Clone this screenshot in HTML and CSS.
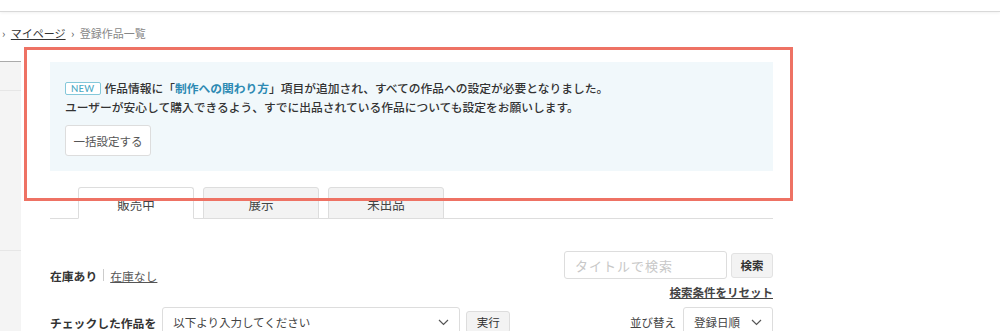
FILE: index.html
```html
<!DOCTYPE html>
<html lang="ja">
<head>
    <meta charset="UTF-8">
    <meta name="viewport" content="width=device-width, initial-scale=1.0">
    <title>登録作品一覧</title>
    <link rel="stylesheet" href="styles.css">
</head>
<body>
    <div class="header"></div>
    <div class="breadcrumb">
        <span class="sep">›</span>
        <a href="#" class="crumb-link">マイページ</a>
        <span class="sep">›</span>
        <span class="crumb-current">登録作品一覧</span>
    </div>
    <div class="layout">
        <div class="sidebar">
            <div class="side-item"></div>
            <div class="side-item tall"></div>
        </div>
        <div class="main">
            <div class="notice">
                <p class="notice-line">
                    <span class="badge">NEW</span>作品情報に「<a href="#" class="notice-link">制作への関わり方</a>」項目が追加され、すべての作品への設定が必要となりました。
                </p>
                <p class="notice-line">ユーザーが安心して購入できるよう、すでに出品されている作品についても設定をお願いします。</p>
                <button type="button" class="btn-bulk">一括設定する</button>
            </div>

            <div class="tabs">
                <div class="tab active">販売中</div>
                <div class="tab">展示</div>
                <div class="tab">未出品</div>
            </div>

            <div class="tools">
                <div class="tools-left">
                    <div class="stock">
                        <span class="stock-on">在庫あり</span>
                        <span class="stock-sep"></span>
                        <a href="#" class="stock-off">在庫なし</a>
                    </div>
                    <div class="action-row">
                        <span class="action-label">チェックした作品を</span>
                        <div class="select wide">
                            <span>以下より入力してください</span>
                            <svg width="11" height="7" viewBox="0 0 11 7"><path d="M1 1l4.5 4.5L10 1" fill="none" stroke="#555" stroke-width="1.2"/></svg>
                        </div>
                        <button type="button" class="btn-small">実行</button>
                    </div>
                </div>
                <div class="tools-right">
                    <div class="search-row">
                        <input type="text" class="search-input" placeholder="タイトルで検索">
                        <button type="button" class="btn-search">検索</button>
                    </div>
                    <a href="#" class="reset-link">検索条件をリセット</a>
                    <div class="sort-row">
                        <span class="sort-label">並び替え</span>
                        <div class="select narrow">
                            <span>登録日順</span>
                            <svg width="11" height="7" viewBox="0 0 11 7"><path d="M1 1l4.5 4.5L10 1" fill="none" stroke="#555" stroke-width="1.2"/></svg>
                        </div>
                    </div>
                </div>
            </div>
        </div>
    </div>

    <!-- annotation frame laid over the page -->
    <div class="highlight"></div>
</body>
</html>
```

FILE: styles.css
```css
body {
    margin: 0;
    font-family: "Noto Sans CJK JP", "Noto Sans", sans-serif;
    color: #333;
    background: #fff;
    overflow: hidden;
}
a {
    color: inherit;
}
p {
    margin: 0;
}
.header {
    height: 11px;
    border-bottom: 1px solid #d9d9d9;
    box-shadow: 0 1px 3px rgba(0, 0, 0, 0.06);
}
.breadcrumb {
    height: 49px;
    padding-left: 2px;
    font-size: 11px;
    line-height: 42px;
    color: #555;
}
.breadcrumb .sep {
    margin-right: 3px;
}
.crumb-link {
    color: #333;
    margin-right: 3px;
}
.crumb-current {
    color: #888;
}
.layout {
    display: flex;
    height: 300px;
}
.sidebar {
    width: 21px;
    background: #f4f4f4;
    border-top: 1px solid #aaa;
}
.side-item {
    height: 28px;
    border-bottom: 1px solid #e6e6e6;
}
.side-item.tall {
    height: 159px;
}
.main {
    width: 723px;
    padding: 1px 0 0 29px;
}
.notice {
    background: #f1f8fb;
    padding: 16px 15px 15px;
    height: 78px;
}
.notice-line {
    font-size: 11.75px;
    line-height: 19px;
    font-weight: 500;
    color: #333;
    white-space: nowrap;
}
.badge {
    display: inline-block;
    font-family: Lato, "Noto Sans", sans-serif;
    font-size: 9.5px;
    line-height: 11px;
    color: #4aa8c3;
    border: 1px solid #84c8da;
    background: #fff;
    border-radius: 2px;
    padding: 0 5px;
    margin-right: 4px;
    vertical-align: 1px;
    letter-spacing: 0.3px;
}
.notice-link {
    color: #2d8ab3;
    text-decoration: none;
    font-weight: 700;
}
.btn-bulk {
    margin-top: 9px;
    width: 86px;
    height: 31px;
    padding: 0;
    font-family: inherit;
    font-size: 11.5px;
    color: #555;
    background: #fff;
    border: 1px solid #ddd;
    border-radius: 3px;
}
.tabs {
    display: flex;
    gap: 9px;
    margin-top: 16px;
    padding-left: 28px;
    border-bottom: 1px solid #ddd;
}
.tab {
    width: 114px;
    height: 30px;
    margin-bottom: -1px;
    text-align: center;
    font-size: 12.5px;
    line-height: 34px;
    color: #444;
    background: #f3f3f3;
    border: 1px solid #ddd;
    border-radius: 3px 3px 0 0;
}
.tab.active {
    background: #fff;
    border-bottom-color: #fff;
}
.tools {
    display: flex;
    justify-content: space-between;
    margin-top: 32px;
}
.tools-left {
    padding-top: 15px;
}
.stock {
    display: flex;
    align-items: center;
    height: 18px;
    font-size: 11.8px;
}
.stock-on {
    font-weight: 700;
}
.stock-sep {
    width: 1px;
    height: 12px;
    background: #ccc;
    margin: 0 6px;
}
.stock-off {
    color: #555;
}
.action-row {
    display: flex;
    align-items: center;
    gap: 6px;
    margin-top: 23px;
}
.action-label {
    font-size: 11.8px;
    font-weight: 700;
    white-space: nowrap;
}
.select {
    display: flex;
    justify-content: space-between;
    align-items: center;
    box-sizing: border-box;
    height: 30px;
    padding: 0 10px;
    font-size: 11.5px;
    color: #444;
    border: 1px solid #ddd;
    border-radius: 3px;
    background: #fff;
    white-space: nowrap;
}
.select.wide {
    width: 298px;
}
.select.narrow {
    width: 90px;
}
.btn-small {
    width: 44px;
    height: 22px;
    padding: 0;
    font-family: inherit;
    font-size: 11.5px;
    color: #333;
    background: #f3f3f3;
    border: 1px solid #ddd;
    border-radius: 3px;
}
.tools-right {
    display: flex;
    flex-direction: column;
    align-items: flex-end;
}
.search-row {
    display: flex;
    align-items: center;
    gap: 4px;
    height: 28px;
}
.search-input {
    box-sizing: border-box;
    width: 163px;
    height: 28px;
    padding: 0 10px;
    font-family: inherit;
    font-size: 13px;
    letter-spacing: 1px;
    border: 1px solid #ddd;
    border-radius: 3px;
}
.search-input::placeholder {
    color: #c8c8c8;
}
.btn-search {
    width: 42px;
    height: 25px;
    padding: 0;
    font-family: inherit;
    font-size: 11.5px;
    font-weight: 700;
    color: #333;
    background: #f3f3f3;
    border: 1px solid #e2e2e2;
    border-radius: 3px;
}
.reset-link {
    margin-top: 5px;
    font-size: 11.5px;
    line-height: 16px;
    font-weight: 700;
    color: #444;
}
.sort-row {
    display: flex;
    align-items: center;
    gap: 7px;
    margin-top: 7px;
}
.sort-label {
    font-size: 11.5px;
    color: #444;
}
.highlight {
    position: absolute;
    left: 24px;
    top: 47px;
    width: 763px;
    height: 148px;
    border: 3px solid #ee7264;
}
```
